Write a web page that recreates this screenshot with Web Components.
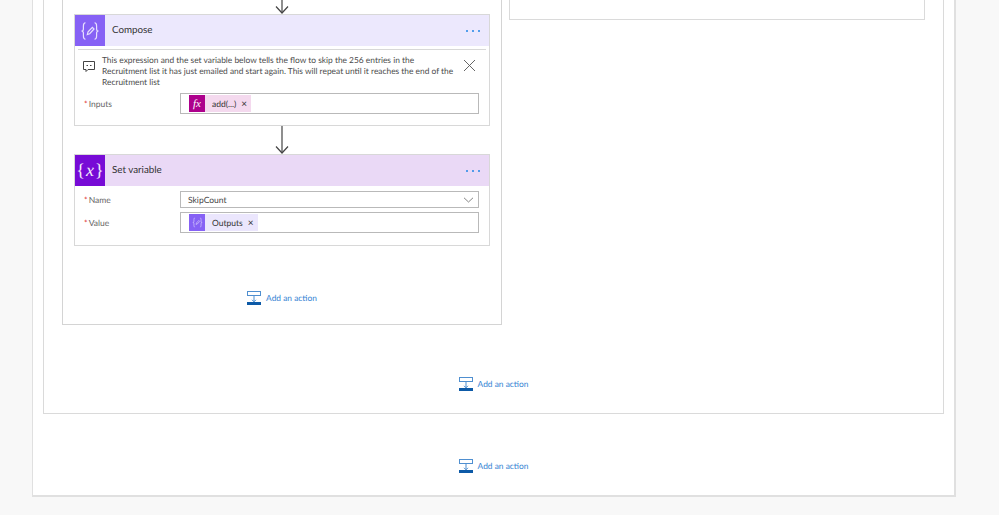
<!DOCTYPE html>
<html>
<head>
<meta charset="utf-8">
<title>Flow</title>
<style>
  html, body { margin: 0; height: 515px; overflow: hidden; background: #f8f8f8; }
  body { font-family: Lato, "Open Sans", "Liberation Sans", sans-serif; color: #444; text-rendering: geometricPrecision; }
</style>
</head>
<body>
<flow-canvas>
  <flow-scope class="outer">
    <flow-scope class="inner">
      <flow-branches>
        <flow-scope class="yes">
          <flow-arrow></flow-arrow>
          <flow-action title="Compose" kind="compose">
            <flow-comment>This expression and the set variable below tells the flow to skip the 256 entries in the Recruitment list it has just emailed and start again. This will repeat until it reaches the end of the Recruitment list</flow-comment>
            <flow-field label="Inputs" tall><flow-token kind="fx">add(...)</flow-token></flow-field>
          </flow-action>
          <flow-arrow></flow-arrow>
          <flow-action title="Set variable" kind="variable">
            <flow-field label="Name" select>SkipCount</flow-field>
            <flow-field label="Value" tall><flow-token kind="compose">Outputs</flow-token></flow-field>
          </flow-action>
          <flow-add-action slot="footer"></flow-add-action>
        </flow-scope>
        <flow-scope class="no"></flow-scope>
      </flow-branches>
      <flow-add-action slot="footer"></flow-add-action>
    </flow-scope>
    <flow-add-action slot="footer"></flow-add-action>
  </flow-scope>
</flow-canvas>

<script>
const composeGlyph = `
  <svg viewBox="0 0 16 16" fill="none" stroke="currentColor" stroke-width=".8">
    <path d="M5 2.5C3.6 2.5 3.6 3.4 3.6 4.6V6.6C3.6 7.5 3.2 8 2.3 8C3.2 8 3.6 8.5 3.6 9.4V11.4C3.6 12.6 3.6 13.5 5 13.5"/>
    <path d="M11 2.5C12.4 2.5 12.4 3.4 12.4 4.6V6.6C12.4 7.5 12.8 8 13.7 8C12.8 8 12.4 8.5 12.4 9.4V11.4C12.4 12.6 12.4 13.5 11 13.5"/>
    <path d="M6.2 10.4L6.7 8.6L9.6 5.5L10.7 6.6L7.8 9.8Z"/>
  </svg>`;

class FlowCanvas extends HTMLElement {
    constructor() {
        super();
        this.attachShadow({mode: "open"}).innerHTML = `
        <style>
          :host { display: block; margin: -60px 0 0 32px; width: 924px; }
        </style>
        <slot></slot>`;
    }
}

class FlowScope extends HTMLElement {
    constructor() {
        super();
        this.attachShadow({mode: "open"}).innerHTML = `
        <style>
          :host {
            display: block;
            box-sizing: border-box;
            background: #fff;
            border: 1px solid #dadada;
            flex: none;
          }
          :host(.outer) { padding-top: 9px; border-width: 0 2px 2px 1px; border-color: #e0e0e0; }
          :host(.inner) { margin: 0 10px 0 10px; }
          :host(.yes) { width: 440px; padding: 26px 11px 0; border-width: 1px; border-color: #d4d4d4; }
          :host(.no) { width: 416px; height: 61px; }
          .footer { display: flex; justify-content: center; }
          :host(.outer) .footer { padding: 45px 0 22px; }
          :host(.inner) .footer { padding: 0 0 22px; }
          :host(.yes) .footer { padding: 45px 0 19px; }
        </style>
        <slot></slot>
        <div class="footer"><slot name="footer"></slot></div>`;
    }
}

class FlowBranches extends HTMLElement {
    constructor() {
        super();
        this.attachShadow({mode: "open"}).innerHTML = `
        <style>
          :host {
            display: flex;
            align-items: flex-start;
            gap: 7px;
            padding: 9px 18px 52px;
          }
        </style>
        <slot></slot>`;
    }
}

class FlowArrow extends HTMLElement {
    constructor() {
        super();
        this.attachShadow({mode: "open"}).innerHTML = `
        <style>
          :host { display: flex; justify-content: center; height: 28px; }
          svg { width: 14px; height: 28px; display: block; }
        </style>
        <svg viewBox="0 0 14 28" fill="none" stroke="#444" stroke-width="1.2">
          <path d="M7 0V27"/>
          <path d="M1 20.5L7 27L13 20.5"/>
        </svg>`;
    }
}

class FlowAction extends HTMLElement {
    constructor() {
        super();
        const kind = this.getAttribute('kind');
        const icon = kind === 'compose'
            ? composeGlyph
            : '<span class="vars">{<i>x</i>}</span>';
        this.attachShadow({mode: "open"}).innerHTML = `
        <style>
          :host {
            display: block;
            width: 416px;
            box-sizing: border-box;
            background: #fff;
            border: 1px solid #d8d8d8;
            --head: #ece8fd;
            --icon: #8661f5;
          }
          :host([kind="variable"]) { --head: #ead9f6; --icon: #770bd6; }
          header {
            display: flex;
            align-items: center;
            height: 31px;
            background: var(--head);
            font-size: 9.8px;
            color: #333;
          }
          .icon {
            width: 30px;
            height: 31px;
            margin-right: 7px;
            display: flex;
            align-items: center;
            justify-content: center;
            background: var(--icon);
            color: #fff;
          }
          .icon svg { width: 24px; height: 24px; opacity: .8; }
          .vars { font: 18px "Liberation Serif", serif; white-space: nowrap; opacity: .92; }
          .vars i { margin: 0 1px; }
          .title { flex: 1; padding-bottom: 1px; }
          .more { display: flex; gap: 4px; margin-right: 9px; }
          .more b { width: 2px; height: 2px; border-radius: 50%; background: #1f86e6; }
          .body { padding: 5px 0 11px; display: flex; flex-direction: column; gap: 4px; }
          :host([kind="variable"]) .body { padding-bottom: 12px; }
        </style>
        <header>
          <div class="icon">${icon}</div>
          <div class="title">${this.getAttribute('title')}</div>
          <div class="more"><b></b><b></b><b></b></div>
        </header>
        <div class="body"><slot></slot></div>`;
    }
}

class FlowComment extends HTMLElement {
    constructor() {
        super();
        this.attachShadow({mode: "open"}).innerHTML = `
        <style>
          :host {
            display: flex;
            margin: -2px 3px 1px;
            padding: 5px 0 0 4px;
            border-top: 1px solid #d8d8d8;
            font-size: 8.4px;
            line-height: 11px;
            color: #4c4c4c;
          }
          .bubble { width: 14px; height: 14px; margin: 4px 6px 0 0; flex: none; }
          .text { width: 352px; margin-right: 4px; }
          .close { width: 13px; height: 13px; margin: 4px 0 0 5px; flex: none; }
        </style>
        <svg class="bubble" viewBox="0 0 14 14" fill="none" stroke="#444" stroke-width="1">
          <path d="M1.5 2.5H12.5V10.5H6L4 12.5V10.5H1.5Z"/>
          <path d="M4.5 6.5H6M8 6.5H9.5" stroke-width="1.2"/>
        </svg>
        <div class="text"><slot></slot></div>
        <svg class="close" viewBox="0 0 13 13" fill="none" stroke="#555" stroke-width=".9">
          <path d="M1 1L12 12M12 1L1 12"/>
        </svg>`;
    }
}

class FlowField extends HTMLElement {
    constructor() {
        super();
        const chevron = this.hasAttribute('select')
            ? `<svg class="chev" viewBox="0 0 10 6" fill="none" stroke="#777" stroke-width=".9"><path d="M.5 .8L5 5L9.5 .8"/></svg>`
            : '';
        this.attachShadow({mode: "open"}).innerHTML = `
        <style>
          :host {
            display: flex;
            align-items: center;
            padding: 0 10px 0 9px;
            font-size: 8.5px;
            color: #666;
          }
          :host([select]) .label { padding-top: 1px; }
          .label { width: 96px; flex: none; }
          .label b { color: #e0262b; font-weight: normal; margin-right: 1px; }
          .box {
            box-sizing: border-box;
            flex: 1;
            height: 17px;
            display: flex;
            align-items: center;
            padding: 1px 0 0 7px;
            border: 1px solid #b9b9b9;
            border-width: 1px 1.5px 1.5px 1px;
            color: #444;
          }
          :host([tall]) .box { height: 21px; padding: 0 0 0 8px; }
          .value { flex: 1; }
          .chev { width: 11px; height: 6px; margin-right: 4px; }
        </style>
        <div class="label"><b>*</b>${this.getAttribute('label')}</div>
        <div class="box"><div class="value"><slot></slot></div>${chevron}</div>`;
    }
}

class FlowToken extends HTMLElement {
    constructor() {
        super();
        const isFx = this.getAttribute('kind') === 'fx';
        const icon = isFx ? '<i>fx</i>' : composeGlyph;
        this.attachShadow({mode: "open"}).innerHTML = `
        <style>
          :host {
            display: inline-flex;
            align-items: center;
            height: 17px;
            vertical-align: top;
            font-size: 8.5px;
            color: #333;
            background: ${isFx ? '#f4d9ee' : '#ebe6fd'};
          }
          .icon {
            width: 16px;
            height: 17px;
            margin-right: 7px;
            display: flex;
            align-items: center;
            justify-content: center;
            background: ${isFx ? '#ad008c' : '#8661f5'};
            color: #fff;
          }
          .icon i { font: italic 11px "Liberation Serif", serif; }
          .icon svg { width: 13px; height: 13px; opacity: .7; }
          .x { margin: 0 4px 0 5px; font-size: 10px; }
        </style>
        <div class="icon">${icon}</div>
        <slot></slot>
        <span class="x">×</span>`;
    }
}

class FlowAddAction extends HTMLElement {
    constructor() {
        super();
        this.attachShadow({mode: "open"}).innerHTML = `
        <style>
          :host {
            display: inline-flex;
            align-items: center;
            gap: 5px;
            height: 14px;
            font-size: 8.4px;
            color: #3583d3;
          }
          svg { width: 14px; height: 14px; display: block; }
        </style>
        <svg viewBox="0 0 14 14" fill="none">
          <rect x=".5" y=".5" width="13" height="4" stroke="#4f8fd0"/>
          <path d="M7 5V11M5 8.8L7 10.8L9 8.8" stroke="#4f8fd0"/>
          <rect x="0" y="11" width="14" height="3" fill="#0d5aa7"/>
        </svg>
        <span>Add an action</span>`;
    }
}

customElements.define('flow-canvas', FlowCanvas);
customElements.define('flow-scope', FlowScope);
customElements.define('flow-branches', FlowBranches);
customElements.define('flow-arrow', FlowArrow);
customElements.define('flow-action', FlowAction);
customElements.define('flow-comment', FlowComment);
customElements.define('flow-field', FlowField);
customElements.define('flow-token', FlowToken);
customElements.define('flow-add-action', FlowAddAction);
</script>
</body>
</html>
